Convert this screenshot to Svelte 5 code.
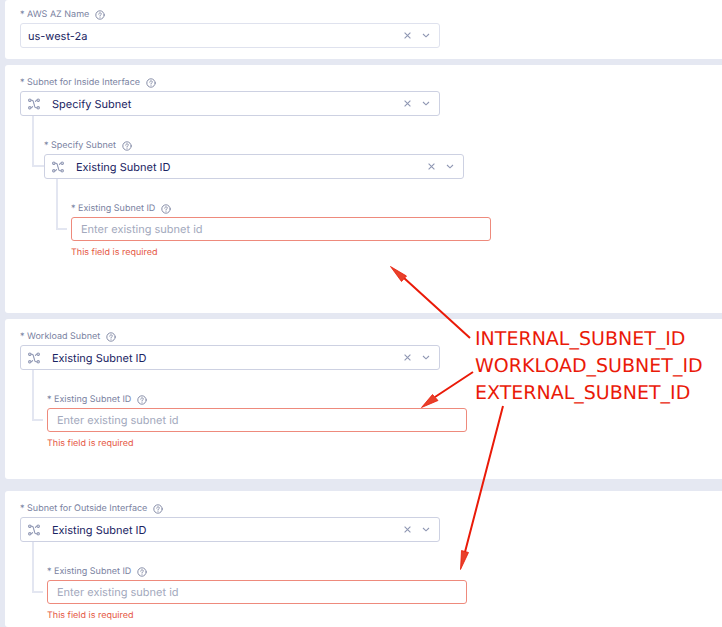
<script>
  let panels = $state([
    {
      id: 'az',
      kind: 'az',
      field: { id: 'az-name', label: 'AWS AZ Name', value: 'us-west-2a', options: ['us-west-2a', 'us-west-2b'], plain: true }
    },
    {
      id: 'inside',
      kind: 'inside',
      field: {
        id: 'inside-subnet',
        label: 'Subnet for Inside Interface',
        value: 'Specify Subnet',
        options: ['Specify Subnet', 'Existing Subnet ID'],
        child: {
          id: 'inside-specify',
          label: 'Specify Subnet',
          value: 'Existing Subnet ID',
          options: ['Existing Subnet ID', 'New Subnet'],
          child: { id: 'inside-id', label: 'Existing Subnet ID', input: true, value: '' }
        }
      }
    },
    {
      id: 'workload',
      kind: 'workload',
      field: {
        id: 'workload-subnet',
        label: 'Workload Subnet',
        value: 'Existing Subnet ID',
        options: ['Existing Subnet ID', 'New Subnet'],
        child: { id: 'workload-id', label: 'Existing Subnet ID', input: true, value: '' }
      }
    },
    {
      id: 'outside',
      kind: 'outside',
      field: {
        id: 'outside-subnet',
        label: 'Subnet for Outside Interface',
        value: 'Existing Subnet ID',
        options: ['Existing Subnet ID', 'New Subnet'],
        child: { id: 'outside-id', label: 'Existing Subnet ID', input: true, value: '' }
      }
    }
  ]);

  const notes = ['INTERNAL_SUBNET_ID', 'WORKLOAD_SUBNET_ID', 'EXTERNAL_SUBNET_ID'];
</script>

{#snippet fieldView(field)}
  <div class="field">
    <div class="caption">
      <label for={field.id}>* {field.label}</label>
      <button class="help" type="button" aria-label="Help">
        <svg viewBox="0 0 10 10" width="10" height="10" fill="none" stroke="currentColor" stroke-linecap="round">
          <circle cx="5" cy="5" r="4.2" stroke-width="0.9" />
          <path d="M3.7 4.1C3.7 2.4 6.3 2.4 6.3 4C6.3 5 5 4.9 5 5.9M5 7.2V7.3" stroke-width="0.9" />
        </svg>
      </button>
    </div>
    {#if field.input}
      <input id={field.id} type="text" placeholder="Enter existing subnet id" bind:value={field.value} aria-invalid="true" aria-describedby="{field.id}-error" />
      <p class="error" id="{field.id}-error">This field is required</p>
    {:else}
      <div class="box" class:light={field.plain}>
        {#if !field.plain}
          <svg class="net" viewBox="0 0 12 12" width="12" height="12" fill="none" stroke="currentColor" stroke-width="1.1">
            <circle cx="1.8" cy="2.2" r="1.2" />
            <circle cx="1.8" cy="9.8" r="1.2" />
            <circle cx="10.2" cy="2.2" r="1.2" />
            <circle cx="10.2" cy="9.8" r="1.2" />
            <path d="M3 2.2H4C5.8 2.2 5.2 4.4 6 6C6.8 7.6 6.2 9.8 8 9.8H9M3 9.8C3.9 9.8 4.4 9.2 4.7 8.2M9 2.2C8.1 2.2 7.6 2.8 7.3 3.8" />
          </svg>
        {/if}
        <select id={field.id} bind:value={field.value}>
          {#each field.options as option}
            <option>{option}</option>
          {/each}
        </select>
        <button class="clear" type="button" aria-label="Clear" onclick={() => (field.value = '')}>
          <svg viewBox="0 0 7 7" width="7" height="7" fill="none" stroke="currentColor" stroke-width="1.1">
            <path d="M0.6 0.6L6.4 6.4M6.4 0.6L0.6 6.4" />
          </svg>
        </button>
        <svg class="chevron" viewBox="0 0 8 5" width="8" height="5" fill="none" stroke="currentColor" stroke-width="1.1">
          <path d="M1 1L4 3.8L7 1" />
        </svg>
      </div>
    {/if}
    {#if field.child}
      <div class="branch" class:leaf={field.child.input}>
        <span class="elbow"></span>
        {@render fieldView(field.child)}
      </div>
    {/if}
  </div>
{/snippet}

<main>
  {#each panels as panel (panel.id)}
    <section class="panel {panel.kind}">
      {@render fieldView(panel.field)}
    </section>
  {/each}

  <svg class="arrows" viewBox="0 0 722 627" width="722" height="627" fill="#e8402a" stroke="#ea1a08" aria-hidden="true">
    <path d="M470 338L404 278M473 372L435 397M503 406L465 552" stroke-width="2" />
    <path d="M390.5 266.5L406.5 276L401.5 281.5ZM421.5 407.5L432.5 394.5L438 400.5ZM460.5 569.5L461.5 550.5L468.5 552.5Z" stroke-width="0.8" />
  </svg>
  <div class="notes">
    {#each notes as note}
      <div>{note}</div>
    {/each}
  </div>
</main>

<style>
  :global(body) {
    margin: 0;
    background: #e5e8f2;
  }

  main {
    position: relative;
    display: flex;
    flex-direction: column;
    min-height: 100vh;
    box-sizing: border-box;
    padding-left: 5px;
    font-family: Inter, "Liberation Sans", sans-serif;
    text-rendering: geometricPrecision;
    color: #1a2463;
    overflow: hidden;
  }

  .panel {
    background: #fff;
    border-radius: 3px 0 0 3px;
    padding: 10px 15px 28px;
  }

  .az {
    padding-top: 7px;
    padding-bottom: 11px;
    margin-bottom: 6px;
  }

  .inside {
    padding-bottom: 53px;
    margin-bottom: 6px;
  }

  .workload {
    margin-bottom: 12px;
  }

  .outside {
    flex: 1;
    padding-bottom: 4px;
  }

  .field {
    flex: 1;
    min-width: 0;
  }

  .caption {
    display: flex;
    align-items: center;
    gap: 6px;
    height: 15px;
    margin-bottom: 1px;
    font-size: 9px;
    line-height: 15px;
    color: #7a829f;
  }

  button {
    display: flex;
    border: 0;
    padding: 0;
    background: none;
    color: inherit;
    cursor: pointer;
  }

  .box,
  input {
    box-sizing: border-box;
    width: 100%;
    max-width: 420px;
    border-radius: 3px;
    background: #fff;
    font-size: 11px;
  }

  .box {
    display: flex;
    align-items: center;
    height: 25px;
    padding: 0 9px 0 7px;
    border: 1px solid #cdd1e2;
    color: #8f97b3;
  }

  .light {
    border-color: #dfe2ee;
  }

  .net {
    margin-right: 12px;
  }

  select {
    flex: 1;
    min-width: 0;
    height: 23px;
    padding: 0;
    border: 0;
    outline: 0;
    appearance: none;
    background: transparent;
    font: inherit;
    text-rendering: inherit;
    color: #1a2463;
  }

  .clear {
    margin-right: 11px;
  }

  input {
    display: block;
    height: 24px;
    padding: 0 9px;
    border: 1px solid #ee8a7c;
    outline: 0;
    font-family: inherit;
    text-rendering: inherit;
    color: #1a2463;
  }

  input::placeholder {
    color: #a3a9bd;
    opacity: 1;
  }

  .error {
    margin: 5px 0 0;
    font-size: 9px;
    line-height: 14px;
    color: #e5573f;
  }

  .branch {
    display: flex;
    align-items: flex-start;
    padding-left: 12px;
  }

  .branch > .field {
    padding-top: 22px;
  }

  .elbow {
    box-sizing: border-box;
    width: 12px;
    height: 51px;
    border: solid #e3e6f1;
    border-width: 0 0 2px 2px;
  }

  .leaf > .elbow {
    width: 11px;
    margin-right: 4px;
  }

  .arrows {
    position: absolute;
    top: 0;
    left: 0;
    pointer-events: none;
  }

  .notes {
    position: absolute;
    top: 326px;
    left: 475px;
    font-family: Verdana, "DejaVu Sans", sans-serif;
    font-size: 19px;
    line-height: 27px;
    color: #ea1a08;
    pointer-events: none;
  }
</style>
